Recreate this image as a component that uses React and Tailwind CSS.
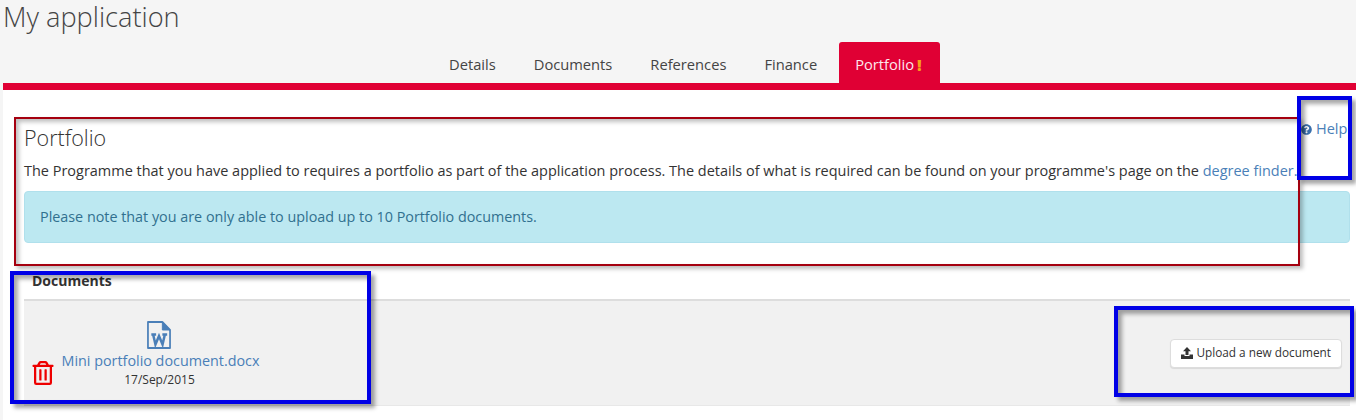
import React from "react";
import { FaQuestionCircle, FaRegTrashAlt } from "react-icons/fa";

const tabs = ["Details", "Documents", "References", "Finance"];

function WordIcon() {
  return (
    <svg className="mr-[4px]" width="24" height="28" viewBox="0 0 25 28" fill="none" preserveAspectRatio="none">
      <path d="M1 1H16L24 9V27H1Z" stroke="#4a7fb8" strokeWidth="1.8" strokeLinejoin="round" />
      <path d="M16 1V9H24Z" fill="#4a7fb8" stroke="#4a7fb8" strokeWidth="1" strokeLinejoin="round" />
      <path d="M4.5 13.5H9.5M6.4 13.5L8.8 23.5L12.5 15L16.2 23.5L18.6 13.5M16 13.5H21" stroke="#4a7fb8" strokeWidth="2.6" />
    </svg>
  );
}

function UploadIcon() {
  return (
    <svg width="12" height="12" viewBox="0 0 12 12" fill="#333">
      <path d="M6 0L10 4.2H7.5V8H4.5V4.2H2Z" />
      <path d="M0 7.5H3.5V9H8.5V7.5H12V12H0Z" />
    </svg>
  );
}

function Annotation({ className }) {
  return <div className={`absolute pointer-events-none ${className}`} />;
}

export default function App() {
  return (
    <div className="relative h-[420px] w-[1356px] overflow-hidden bg-[#f5f5f5] font-['Open_Sans',sans-serif] text-[14.5px] text-[#333]">
      <header className="relative h-[83px]">
        <h1 className="pl-[3px] text-[27.2px] leading-[34px] font-light text-[#444]">My application</h1>
        <nav className="absolute left-[430px] top-[42px] flex h-[41px] items-center">
          {tabs.map((t) => (
            <a key={t} className="flex h-full items-center px-[19px] pt-[4px] text-[14.7px] text-[#444]">{t}</a>
          ))}
          <a className="ml-[3px] flex h-full w-[101px] items-center rounded-t-[3px] bg-[#e00034] pl-[16px] pt-[4px] text-[14.7px] text-[#fde8ec]">
            Portfolio<span className="ml-[3px] text-[16px] leading-[16px] font-extrabold text-[#f7a11a]">!</span>
          </a>
        </nav>
      </header>
      <div className="ml-[3px] h-[7px] bg-[#e00034]" />
      <main className="ml-[3px] h-[330px] bg-white">
        <div className="pl-[21px] pr-[6px]">
          <h2 className="pt-[34px] text-[21.5px] leading-[28px] font-light text-[#333]">Portfolio</h2>
          <p className="mt-[9px] text-[14.47px] leading-[20px] whitespace-nowrap">
            The Programme that you have applied to requires a portfolio as part of the application process. The details of what is required can be found on your programme's page on the <a className="text-[#4a7fb8]">degree finder.</a>
          </p>
          <div className="mt-[10px] flex h-[52px] items-center rounded-[4px] border border-[#b0e0ec] bg-[#bce8f1] px-[15px] text-[14.35px] text-[#31708f]">
            Please note that you are only able to upload up to 10 Portfolio documents.
          </div>
          <h3 className="mt-[28px] pl-[8px] text-[14px] leading-[20px] font-bold">Documents</h3>
          <div className="mt-[8px] flex h-[107px] items-center justify-between border-t-2 border-b border-t-[#ddd] border-b-[#e8e8e8] bg-[#f1f1f1] pr-[8px]">
            <div className="relative h-full w-[273px]">
              <div className="flex flex-col items-center pt-[20px]">
                <WordIcon />
                <a className="mt-[2px] text-[14.35px] leading-[20px] text-[#4a7fb8]">Mini portfolio document.docx</a>
                <span className="mr-[2px] text-[12px] leading-[17px]">17/Sep/2015</span>
              </div>
              <div className="absolute left-[7px] top-[60px]">
                <FaRegTrashAlt size={24} color="#ee0000" />
              </div>
            </div>
            <button className="flex h-[29px] items-center gap-[3px] rounded-[4px] border border-[#ddd] bg-white px-[10px] text-[11.8px] text-[#333] shadow-[0_1px_1px_rgba(0,0,0,0.1)]">
              <UploadIcon />
              Upload a new document
            </button>
          </div>
        </div>
      </main>
      <a className="absolute left-[1301px] top-[120px] flex items-center gap-[4px] text-[14.5px] leading-[18px] text-[#4a7fb8]">
        <FaQuestionCircle size={11} color="#3a70ad" />
        Help
      </a>
      <Annotation className="left-[14px] top-[117px] h-[149px] w-[1286px] border-2 border-[#a5000f] shadow-[inset_3px_3px_4px_rgba(0,0,0,0.25),3px_3px_4px_rgba(0,0,0,0.25)]" />
      <Annotation className="left-[1297px] top-[96px] h-[84px] w-[55px] border-[4px] border-[#0000e6] shadow-[inset_4px_4px_4px_rgba(0,0,0,0.35),4px_4px_4px_rgba(0,0,0,0.35)]" />
      <Annotation className="left-[10px] top-[271px] h-[133px] w-[361px] border-[4px] border-[#0000e6] shadow-[inset_4px_4px_4px_rgba(0,0,0,0.35),4px_4px_4px_rgba(0,0,0,0.35)]" />
      <Annotation className="left-[1114px] top-[306px] h-[91px] w-[240px] border-[4px] border-[#0000e6] shadow-[inset_4px_4px_4px_rgba(0,0,0,0.35),4px_4px_4px_rgba(0,0,0,0.35)]" />
    </div>
  );
}
